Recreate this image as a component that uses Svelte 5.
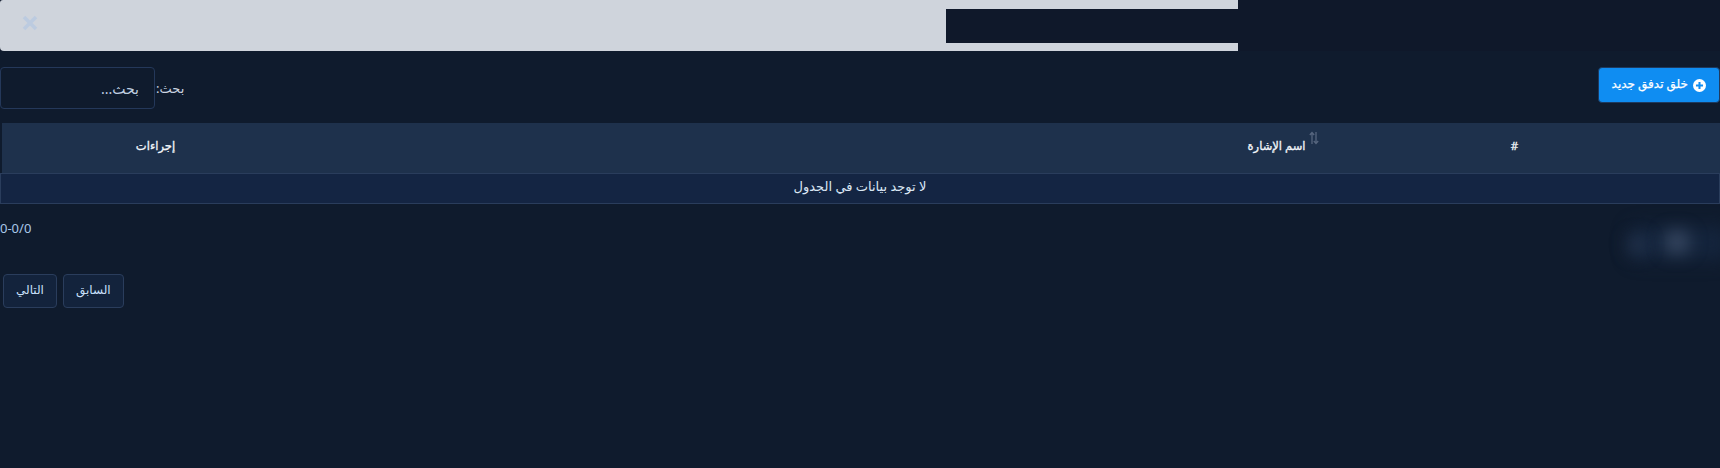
<script lang="ts">
  const columns = ['#', 'اسم الإشارة', 'إجراءات'];
</script>

<div class="page" dir="rtl">
  <div class="top">
    <div class="spacer"></div>
    <div class="banner">
      <div class="masked"></div>
      <svg class="close" viewBox="0 0 16 16" width="16" height="16" aria-hidden="true">
        <path d="M2 2 14 14M14 2 2 14" stroke="#bccbe0" stroke-width="3.6" fill="none" />
      </svg>
    </div>
  </div>

  <div class="toolbar">
    <button class="create">
      <svg viewBox="0 0 14 14" width="13" height="13" aria-hidden="true">
        <circle cx="7" cy="7" r="7" fill="#fff" />
        <path d="M7 3.2v7.6M3.2 7h7.6" stroke="#0f8df2" stroke-width="2.2" />
      </svg>
      <span>خلق تدفق جديد</span>
    </button>
    <label class="search">
      <span>بحث:</span>
      <input placeholder="بحث..." />
    </label>
  </div>

  <table>
    <thead>
      <tr>
        {#each columns as col, i}
          <th class="col-{i}">
            {col}
            {#if i === 1}
              <svg class="sort" viewBox="0 0 10 14" width="10" height="14" aria-hidden="true">
                <path d="M3 13V1.5M.8 4 3 1.5 5.2 4" stroke="#56657e" stroke-width="1.3" fill="none" />
                <path d="M7 1v11.5M4.8 10 7 12.5 9.2 10" stroke="#56657e" stroke-width="1.3" fill="none" />
              </svg>
            {/if}
          </th>
        {/each}
      </tr>
    </thead>
    <tbody>
      <tr><td colspan="3">لا توجد بيانات في الجدول</td></tr>
    </tbody>
  </table>

  <div class="info" dir="ltr">0-0/0</div>

  <div class="pager">
    <button>السابق</button>
    <button>التالي</button>
  </div>

  <div class="blob glow"></div>
  <div class="blob big"></div>
  <div class="blob small"></div>
</div>

<style>
  :global(body) {
    margin: 0;
    background: #0f1b2d;
  }
  .page {
    position: relative;
    width: 1720px;
    height: 468px;
    overflow: hidden;
    background: #0f1b2d;
    font-family: "Noto Sans", "DejaVu Sans", sans-serif;
    color: #e2e8f0;
    font-size: 13px;
  }
  .top {
    display: flex;
    height: 51px;
    background: #0f182a;
  }
  .spacer { width: 482px; }
  .banner {
    position: relative;
    width: 1238px;
    background: #cfd4dc;
    border-radius: 3px 0 0 4px;
  }
  .masked {
    position: absolute;
    top: 9px;
    right: 0;
    width: 292px;
    height: 34px;
    background: #0f182a;
  }
  .close {
    position: absolute;
    left: 22px;
    top: 15px;
  }
  .toolbar {
    display: flex;
    justify-content: space-between;
    align-items: flex-start;
    padding-top: 16px;
    height: 56px;
  }
  .create {
    display: flex;
    align-items: center;
    gap: 5px;
    box-sizing: border-box;
    width: 122px;
    height: 36px;
    padding: 0 13px 3px 0;
    background: #0f8df2;
    border: 1px solid #1e3a5f;
    border-radius: 4px;
    color: #fff;
    font: inherit;
    font-size: 12px;
    -webkit-text-stroke: 0.25px #fff;
    white-space: nowrap;
  }
  .create svg { margin-top: 3px; flex-shrink: 0; }
  .search {
    display: flex;
    align-items: center;
    gap: 1px;
    color: #cbd5e1;
    font-size: 13px;
  }
  .search input {
    box-sizing: border-box;
    width: 155px;
    height: 42px;
    padding: 0 15px;
    background: transparent;
    border: 1px solid #24385a;
    border-radius: 4px;
    color: #c0d0e2;
    font: inherit;
    font-size: 14px;
    outline: none;
  }
  .search input::placeholder { color: #c0d0e2; opacity: 1; }
  table {
    width: 1720px;
    border-collapse: collapse;
    table-layout: fixed;
  }
  th {
    box-sizing: border-box;
    height: 50px;
    padding: 0 4px 4px;
    background: #1e314c;
    color: #f1f5f9;
    font-size: 11.5px;
    font-weight: 400;
    -webkit-text-stroke: 0.3px #f1f5f9;
    text-align: center;
    position: relative;
  }
  .col-0 { width: 410px; }
  .col-1 { text-align: right; }
  .col-2 { width: 310px; box-shadow: inset 1px 0 0 #0f1b2d; }
  .sort {
    position: absolute;
    right: -9px;
    top: 8px;
  }
  td {
    box-sizing: border-box;
    height: 30px;
    padding: 0 0 4px;
    background: #142543;
    border: 1px solid #2a3d5c;
    color: #dbe7f5;
    text-align: center;
    font-size: 13px;
  }
  .info {
    margin-top: 14px;
    height: 20px;
    line-height: 20px;
    text-align: left;
    color: #a9c8e8;
    font-size: 13px;
  }
  .pager {
    display: flex;
    justify-content: flex-end;
    gap: 6px;
    margin-top: 36px;
    padding-left: 3px;
  }
  .pager button {
    box-sizing: border-box;
    height: 34px;
    padding: 0 12px 3px;
    background: #13233c;
    border: 1px solid #2a3d5c;
    border-radius: 4px;
    color: #c9e0fb;
    font: inherit;
    font-size: 12px;
  }
  .blob {
    position: absolute;
    border-radius: 50%;
    filter: blur(9px);
  }
  .blob.glow {
    left: 1630px;
    top: 226px;
    width: 100px;
    height: 34px;
    border-radius: 10px;
    background: #14243c;
  }
  .blob.big {
    left: 1665px;
    top: 231px;
    width: 24px;
    height: 22px;
    background: #3f4f69;
  }
  .blob.small {
    left: 1629px;
    top: 237px;
    width: 16px;
    height: 16px;
    background: #2c3c58;
  }
</style>
